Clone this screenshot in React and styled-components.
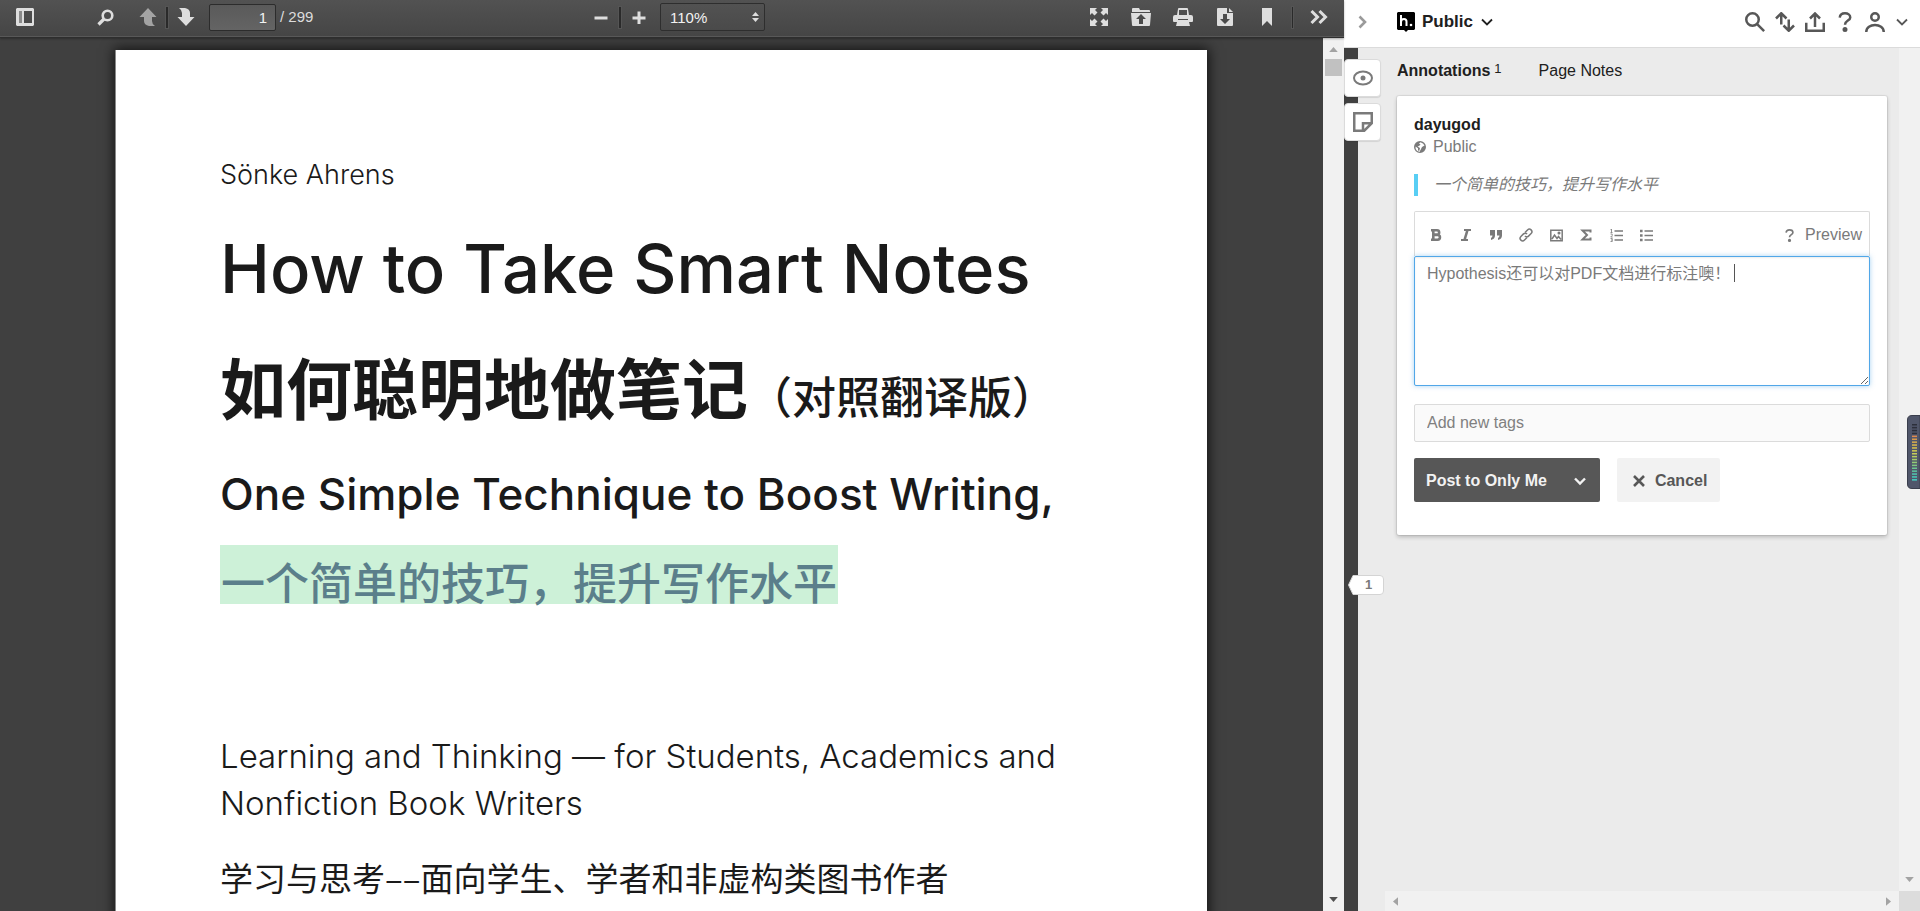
import React, { useState } from "react";
import styled, { createGlobalStyle } from "styled-components";

const GlobalStyle = createGlobalStyle`
  * {
    box-sizing: border-box;
  }
  body {
    margin: 0;
    overflow: hidden;
    font-family: "Liberation Sans", "Noto Sans CJK SC", sans-serif;
  }
  button, input, select, textarea {
    font-family: inherit;
    margin: 0;
  }
`;

const Layout = styled.div`
  display: flex;
  height: 100vh;
`;

//pdf viewer
const Viewer = styled.main`
  flex: 1;
  min-width: 0;
  display: flex;
  flex-direction: column;
  background-color: #404040;
`;

const Toolbar = styled.header`
  display: grid;
  grid-template-columns: 1fr auto 1fr;
  align-items: center;
  height: 38px;
  flex-shrink: 0;
  padding: 0 7px 3px 7px;
  color: #dcdcdc;
  background: linear-gradient(#525252, #454545);
  border-bottom: 1px solid #2e2e2e;
  box-shadow: inset 0 -1px 0 #585858, 0 1px 2px rgba(0, 0, 0, 0.3);
  z-index: 1;
`;

const ToolGroup = styled.div`
  display: flex;
  align-items: center;
  justify-content: ${(props) => props.$align || "flex-start"};
  gap: ${(props) => props.$gap || 0}px;
`;

const ZoomGroup = styled(ToolGroup)`
  margin-left: 4px;
`;

const ToolButton = styled.button`
  display: flex;
  align-items: center;
  justify-content: center;
  width: 36px;
  height: 30px;
  padding: 0;
  border: 0;
  background: none;
  color: #dedede;
  opacity: ${(props) => (props.disabled ? 0.6 : 1)};
`;

const Spacer = styled.div`
  width: ${(props) => props.$width}px;
`;

const Divider = styled.div`
  width: 2px;
  height: 21px;
  background: #2a2a2a;
  box-shadow: 0 0 0 1px #555;
`;

const EndDivider = styled(Divider)`
  width: 1px;
  margin: 0 2px 0 1px;
`;

const PageNumber = styled.input`
  width: 67px;
  height: 27px;
  margin: 0 4px 0 5px;
  padding: 0 8px 0 4px;
  border: 1px solid #2c2c2c;
  border-radius: 2px;
  background: linear-gradient(#5a5a5a, #646464);
  color: #f2f2f2;
  font-size: 15px;
  text-align: right;
  outline: none;
`;

const PageCount = styled.label`
  font-size: 15px;
  line-height: 20px;
`;

const ZoomBox = styled.div`
  position: relative;
  margin-left: 3px;
`;

const ZoomSelect = styled.select`
  appearance: none;
  display: block;
  width: 105px;
  height: 28px;
  padding: 0 24px 0 9px;
  border: 1px solid #2e2e2e;
  border-radius: 2px;
  background: linear-gradient(#525252, #4a4a4a);
  color: #f2f2f2;
  font-size: 15px;
`;

const ZoomArrows = styled.svg`
  position: absolute;
  right: 6px;
  top: 9px;
  pointer-events: none;
`;

const ViewerBody = styled.div`
  flex: 1;
  min-height: 0;
  display: flex;
`;

const PageArea = styled.div`
  flex: 1;
  min-width: 0;
  overflow: hidden;
  padding-top: 12px;
`;

const Page = styled.article`
  max-width: 1091px;
  min-height: 1400px;
  margin: 0 auto;
  padding: 105px 104px;
  background: #fff;
  color: #1a1a1a;
  box-shadow: -1px 0 0 #8a8a8a, 0 0 12px 2px rgba(0, 0, 0, 0.7);
  font-family: Inter, "Noto Sans CJK SC", sans-serif;
`;

const Author = styled.p`
  margin: 0 0 34px;
  font-size: 27px;
  line-height: 40px;
  font-weight: 300;
`;

const Title = styled.h1`
  margin: 0 0 41px;
  font-size: 67px;
  line-height: 80px;
  font-weight: 500;
`;

const TitleZh = styled.h2`
  margin: 0 0 34px;
  font-size: 66px;
  line-height: 80px;
  font-weight: 700;
`;

const Edition = styled.span`
  font-size: 44px;
  line-height: 44px;
  font-weight: 500;
`;

const Subtitle = styled.h2`
  margin: 0 0 21px;
  font-size: 44px;
  line-height: 60px;
  font-weight: 500;
  white-space: nowrap;
`;

const Highlight = styled.mark`
  display: block;
  width: fit-content;
  margin: 0 0 129px;
  padding: 19px 1px 0;
  background: #cdf1d8;
  color: #5b7f8b;
  font-size: 44px;
  line-height: 40px;
  font-weight: 500;
`;

const Blurb = styled.p`
  margin: 0 0 27px;
  font-size: 33px;
  line-height: 47px;
  font-weight: 300;
`;

const BlurbZh = styled(Blurb)`
  font-family: "Noto Sans CJK SC", sans-serif;
  font-weight: 400;
`;

//scroll bars
const Scrollbar = styled.div`
  display: flex;
  flex-direction: ${(props) => (props.$horizontal ? "row" : "column")};
  align-items: center;
  justify-content: space-between;
  padding: ${(props) => (props.$horizontal ? "0 8px" : "9px 0")};
  width: ${(props) => (props.$horizontal ? "auto" : "21px")};
  background: #f1f1f1;
`;

const ScrollStart = styled.div`
  display: flex;
  flex-direction: column;
  align-items: center;
  gap: 7px;
`;

const Thumb = styled.div`
  width: 17px;
  height: 17px;
  background: #c1c1c1;
`;

//hypothesis sidebar
const Sidebar = styled.aside`
  width: 30%;
  display: flex;
  flex-direction: column;
  background: #ebebeb;
`;

const TopBar = styled.header`
  display: flex;
  align-items: center;
  height: 48px;
  flex-shrink: 0;
  padding: 0 6px 3px 8px;
  border-bottom: 1px solid #dbdbdb;
  background: #fff;
  color: #575757;
`;

const IconButton = styled.button`
  display: flex;
  align-items: center;
  justify-content: center;
  width: ${(props) => props.$width || 30}px;
  height: 30px;
  padding: 0;
  border: 0;
  background: none;
  color: inherit;
`;

const GroupButton = styled.button`
  display: flex;
  align-items: center;
  gap: 7px;
  margin: 0 auto 0 25px;
  padding: 0;
  border: 0;
  background: none;
  color: #202020;
  font-size: 17px;
  font-weight: bold;
`;

const SidebarBody = styled.div`
  flex: 1;
  min-height: 0;
  display: grid;
  grid-template-columns: 14px 27px 1fr 21px;
  grid-template-rows: 1fr 20px;
`;

const Strip = styled.div`
  position: relative;
  grid-row: 1 / 3;
  background: #404040;
`;

const Gutter = styled.div`
  grid-row: 1 / 3;
`;

const SideControls = styled.div`
  position: absolute;
  top: 11px;
  left: 0;
  display: flex;
  flex-direction: column;
  gap: 6px;
`;

const SideButton = styled.button`
  display: flex;
  align-items: center;
  justify-content: center;
  width: 37px;
  height: 38px;
  padding: 0;
  border: 1px solid #dbdbdb;
  border-radius: 4px;
  background: #fff;
  color: #7a7a7a;
  box-shadow: 0 1px 1px rgba(0, 0, 0, 0.1);
`;

const Bucket = styled.button`
  position: absolute;
  top: 527px;
  left: 4px;
  width: 36px;
  height: 20px;
  padding: 0 0 0 5px;
  border: 0;
  background: none;
  color: #7a7a7a;
  font-size: 13px;
  font-weight: bold;
  line-height: 20px;
`;

const BucketShape = styled.svg`
  position: absolute;
  top: 0;
  left: 0;
  z-index: -1;
`;

const BucketLayer = styled.div`
  position: relative;
  z-index: 1;
`;

const Annotations = styled.div`
  padding: 0 12px;
`;

const Tabs = styled.nav`
  display: flex;
  gap: 37px;
  padding: 12px 0 14px;
`;

const Tab = styled.button`
  display: flex;
  gap: 4px;
  padding: 0;
  border: 0;
  background: none;
  color: #202020;
  font-size: 16px;
  line-height: 22px;
  font-weight: ${(props) => (props.$selected ? "bold" : "normal")};
`;

const TabCount = styled.span`
  font-size: 13px;
  line-height: 18px;
  font-weight: normal;
`;

const Card = styled.section`
  padding: 18px 17px 33px;
  border-radius: 2px;
  background: #fff;
  box-shadow: 0 0 0 1px rgba(0, 0, 0, 0.06), 0 2px 4px rgba(0, 0, 0, 0.22);
  color: #7a7a7a;
  font-size: 16px;
  line-height: 22px;
`;

const UserName = styled.h3`
  margin: 0;
  color: #202020;
  font-size: 16px;
  line-height: 22px;
`;

const ShareInfo = styled.div`
  display: flex;
  align-items: center;
  gap: 7px;
`;

const Quote = styled.blockquote`
  margin: 16px 0 15px;
  padding-left: 16px;
  border-left: 4px solid #58cef4;
  font-style: italic;
`;

const EditorToolbar = styled.div`
  display: flex;
  align-items: center;
  height: 45px;
  padding: 2px 7px 0 6px;
  border: 1px solid #dbdbdb;
  border-bottom: 0;
  border-radius: 2px 2px 0 0;
`;

const PreviewButton = styled.button`
  padding: 0;
  border: 0;
  background: none;
  color: inherit;
  font-size: 16px;
`;

const HelpLink = styled.a`
  display: flex;
  margin: 0 9px 0 auto;
  color: inherit;
`;

const EditorBox = styled.div`
  position: relative;
  display: flex;
`;

const Editor = styled.textarea`
  display: block;
  width: 100%;
  height: 130px;
  padding: 6px 12px;
  border: 1px solid #51a7e8;
  border-radius: 2px;
  outline: none;
  box-shadow: 0 1px 2px rgba(0, 0, 0, 0.08) inset, 0 0 5px rgba(81, 167, 232, 0.5);
  color: #7a7a7a;
  caret-color: transparent;
  font-size: 16px;
  line-height: 22px;
  resize: vertical;
`;

const Caret = styled.span`
  position: absolute;
  top: 8px;
  left: 320px;
  width: 1px;
  height: 18px;
  background: #555;
`;

const TagInput = styled.input`
  display: block;
  width: 100%;
  height: 38px;
  margin: 18px 0 16px;
  padding: 0 12px;
  border: 1px solid #dbdbdb;
  border-radius: 2px;
  background: #fafafa;
  font-size: 16px;
  &::placeholder {
    color: #808080;
  }
`;

const Actions = styled.div`
  display: flex;
  gap: 17px;
`;

const PostGroup = styled.div`
  display: flex;
  border-radius: 2px;
  background: #575757;
  color: #f2f2f2;
`;

const PostButton = styled.button`
  height: 44px;
  padding: 1px 12px 0;
  border: 0;
  background: none;
  color: inherit;
  font-size: 16px;
  font-weight: bold;
`;

const PostMenuButton = styled(PostButton)`
  display: flex;
  align-items: center;
  padding: 1px 13px 0 14px;
`;

const CancelButton = styled(PostButton)`
  display: flex;
  align-items: center;
  gap: 9px;
  padding: 1px 13px 0 15px;
  border-radius: 2px;
  background: #f2f2f2;
  color: #575757;
`;

const Corner = styled.div`
  background: #dcdcdc;
`;

const LevelMeter = styled.svg`
  position: fixed;
  right: 0;
  top: 415px;
`;

//icons
const Icon = ({ size = 20, box = 16, width = 2, children }) => (
  <svg
    width={size}
    height={size}
    viewBox={`0 0 ${box} ${box}`}
    fill="none"
    stroke="currentColor"
    strokeWidth={width}
    aria-hidden="true"
  >
    {children}
  </svg>
);

const Solid = ({ w = 20, h = 20, children }) => (
  <svg width={w} height={h} viewBox={`0 0 ${w} ${h}`} fill="currentColor" aria-hidden="true">
    {children}
  </svg>
);

const Chevron = ({ size = 14, width = 2 }) => (
  <Icon size={size} box={14} width={width}>
    <path d="M2 4.5l5 5 5-5" />
  </Icon>
);

const arrowPaths = {
  up: "M6 0L0 7h12z",
  down: "M0 0h12L6 7z",
  left: "M7 0v12L0 6z",
  right: "M0 0l7 6-7 6z",
};

const ScrollArrow = ({ dir, color = "#a3a3a3" }) => {
  const flat = dir === "up" || dir === "down";
  return (
    <svg
      width={flat ? 9 : 5}
      height={flat ? 5 : 9}
      viewBox={flat ? "0 0 12 7" : "0 0 7 12"}
      fill={color}
      aria-hidden="true"
    >
      <path d={arrowPaths[dir]} />
    </svg>
  );
};

const formatTools = [
  {
    name: "Bold",
    icon: (
      <Icon box={12} size={12} width={2.6}>
        <path d="M1 1.300h6a2.100 2.100 0 0 1 0 4.300H3M3 6h4.600a2.300 2.300 0 0 1 0 4.700H1M3.300 1v10" />
      </Icon>
    ),
  },
  {
    name: "Italic",
    icon: (
      <Icon box={12} size={12}>
        <path d="M4 1h7M1 11h7" />
        <path d="M7.500 1l-3 10" strokeWidth="2.600" />
      </Icon>
    ),
  },
  {
    name: "Quote",
    icon: (
      <Solid w={12} h={12}>
        <path d="M0 1h5v5.500Q5 10 1 11V9q1.500-.8 1.500-2.500H0zM7 1h5v5.500Q12 10 8 11V9q1.500-.8 1.500-2.500H7z" />
      </Solid>
    ),
  },
  {
    name: "Link",
    icon: (
      <Icon size={14} box={14} width={1.500}>
        <path d="M6 4.500l2.500-2.600a2.500 2.500 0 0 1 3.600 3.600L9.500 8.100a2.500 2.500 0 0 1-3.600 0" />
        <path d="M8 9.500l-2.500 2.600a2.500 2.500 0 0 1-3.600-3.600l2.600-2.600a2.500 2.500 0 0 1 3.600 0" />
      </Icon>
    ),
  },
  {
    name: "Image",
    icon: (
      <Icon size={13} box={13} width={1.500}>
        <path d="M.8 1.200h11.400v10.600H.8zM2 10l2.500-4L7 9.500 8.500 7.500l2.500 3" />
        <circle cx="9" cy="4" r=".8" />
      </Icon>
    ),
  },
  {
    name: "Math",
    icon: (
      <Icon size={12} box={12}>
        <path d="M10.500 3.500V1.500H2.500L7 6l-4.500 4.500h8v-2" />
      </Icon>
    ),
  },
  {
    name: "Numbered list",
    icon: (
      <Icon size={13} box={13} width={1.600}>
        <path d="M4.500 2H13M4.500 6.500H13M4.500 11H13" />
        <path d="M1.500 0v3.500M.5.600h1M.5 3.500h2M.5 5h1.700v1.500L.7 8h2M.5 9.500h1.800v3H.5M1 11h1" strokeWidth=".8" />
      </Icon>
    ),
  },
  {
    name: "Bulleted list",
    icon: (
      <Icon size={13} box={13} width={1.600}>
        <path d="M4.500 2H13M4.500 6.500H13M4.500 11H13" />
        <path d="M0 2h2.600M0 6.500h2.600M0 11h2.600" strokeWidth="2.600" />
      </Icon>
    ),
  },
];

const sidebarTools = [
  {
    name: "Search",
    icon: (
      <Icon>
        <circle cx="6" cy="6" r="5" />
        <path d="M9.700 9.700l5.600 5.600" />
      </Icon>
    ),
  },
  {
    name: "Sort",
    icon: (
      <Icon>
        <path d="M5 10V1.500M.8 5.200L5 1l4.200 4.200M11 6v8.500M6.800 10.800L11 15l4.200-4.200" />
      </Icon>
    ),
  },
  {
    name: "Share",
    icon: (
      <Icon>
        <path d="M8 12V1.500M4 5.200L8 1.200l4 4M1 8.500V15h14V8.500" />
      </Icon>
    ),
  },
  {
    name: "Help",
    icon: (
      <Icon>
        <path d="M3.800 4.500C4 2.200 5.600 1 8 1s4.200 1.300 4.200 3.300C12.200 7 8 6.800 8 10.200" />
        <circle cx="8" cy="14" r="1" />
      </Icon>
    ),
  },
  {
    name: "Account",
    icon: (
      <Icon>
        <circle cx="8" cy="4" r="3" />
        <path d="M1 16c0-7.500 14-7.500 14 0" />
      </Icon>
    ),
  },
];

const meterColors = [
  "#2c2f3b", "#2c2f3b", "#2c2f3b", "#2c2f3b", "#e08a4e", "#d99a4c", "#d9ad4c",
  "#dcb94a", "#d9c44c", "#d2cc50", "#c8d058", "#b8d060", "#a4cf6a", "#92cc74",
  "#80c880", "#6cc690", "#5cc6a0", "#50c8b0", "#48ccba", "#44d0c4",
];

const PdfToolbar = () => (
  <Toolbar>
    <ToolGroup>
      <ToolButton aria-label="Toggle sidebar">
        <Solid w={18} h={18}>
          <path fillRule="evenodd" d="M1 0h16l1 1v16l-1 1H1l-1-1V1zM8 3v12h8V3z" />
          <path d="M3 3h3v12H3z" fill="#8a8a8a" />
        </Solid>
      </ToolButton>
      <Spacer $width={44} />
      <ToolButton aria-label="Find">
        <Icon size={17} box={17} width={2.600}>
          <circle cx="10.500" cy="6.500" r="4.800" />
          <path d="M7 10l-5.500 5.500" strokeWidth="3.200" />
        </Icon>
      </ToolButton>
      <Spacer $width={7} />
      <ToolButton aria-label="Previous page" disabled>
        <Solid w={18} h={18}>
          <path d="M9 0l8.500 9H13v4q0 3 3 5h-6q-5-1-5-5V9H.5z" />
        </Solid>
      </ToolButton>
      <Divider />
      <ToolButton aria-label="Next page">
        <Solid w={18} h={18}>
          <path d="M9 18L.5 9H5V5q0-3-3-5h6q5 1 5 5v4h4.500z" />
        </Solid>
      </ToolButton>
      <PageNumber id="pageNumber" defaultValue="1" />
      <PageCount htmlFor="pageNumber">/ 299</PageCount>
    </ToolGroup>
    <ZoomGroup>
      <ToolButton aria-label="Zoom out">
        <Icon size={14} box={14} width={3}>
          <path d="M.5 8h13" />
        </Icon>
      </ToolButton>
      <Divider />
      <ToolButton aria-label="Zoom in">
        <Icon size={14} box={14} width={3}>
          <path d="M.5 8h13M7 1.500v13" />
        </Icon>
      </ToolButton>
      <ZoomBox>
        <ZoomSelect aria-label="Zoom" defaultValue="110">
          <option value="110">110%</option>
        </ZoomSelect>
        <ZoomArrows width="7" height="10" viewBox="0 0 7 10" fill="#dedede">
          <path d="M3.500 0L7 4H0zM3.500 10L0 6h7z" />
        </ZoomArrows>
      </ZoomBox>
    </ZoomGroup>
    <ToolGroup $align="flex-end" $gap={6}>
      <ToolButton aria-label="Presentation mode">
        <Solid w={18} h={18}>
          <path d="M0 0h7L5 2l2.500 2.500-3 3L2 5 0 7zM18 0v7l-2-2-2.500 2.500-3-3L13 2l-2-2zM0 18v-7l2 2 2.500-2.500 3 3L5 16l2 2zM18 18h-7l2-2-2.500-2.500 3-3L16 13l2-2z" />
        </Solid>
      </ToolButton>
      <ToolButton aria-label="Open file">
        <Solid w={20} h={18}>
          <path d="M1 4V1q0-1 1-1h6l1 2h9q1 0 1 1v1z" />
          <path fillRule="evenodd" d="M0 5h20l-1 12q0 1-1 1H2q-1 0-1-1zM10 6l-5 5h3v5h4v-5h3z" />
        </Solid>
      </ToolButton>
      <ToolButton aria-label="Print">
        <Solid w={20} h={18}>
          <path fillRule="evenodd" d="M4 7l1-6q0-1 1-1h8q1 0 1 1l1 6h2q2 0 2 2v4q0 1-1 1h-3l1 4H3l1-4H1q-1 0-1-1V9q0-2 2-2zM6 2v5h8V2zM5 11v1h10v-1z" />
        </Solid>
      </ToolButton>
      <ToolButton aria-label="Download">
        <Solid w={16} h={18}>
          <path fillRule="evenodd" d="M1 0h9v5h6v12q0 1-1 1H1q-1 0-1-1V1q0-1 1-1zM6 6v5H3l5 5 5-5h-3V6z" />
          <path d="M12 0l4 4h-4z" />
        </Solid>
      </ToolButton>
      <ToolButton aria-label="Bookmark">
        <Solid w={10} h={18}>
          <path d="M0 0h10v18l-5-5-5 5z" />
        </Solid>
      </ToolButton>
      <EndDivider />
      <ToolButton aria-label="Tools">
        <Icon size={18} box={18} width={3}>
          <path d="M1.500 3l6 6-6 6M9.500 3l6 6-6 6" />
        </Icon>
      </ToolButton>
    </ToolGroup>
  </Toolbar>
);

const PdfPage = () => (
  <Page>
    <Author>Sönke Ahrens</Author>
    <Title>How to Take Smart Notes</Title>
    <TitleZh>
      如何聪明地做笔记<Edition>（对照翻译版）</Edition>
    </TitleZh>
    <Subtitle>One Simple Technique to Boost Writing,</Subtitle>
    <Highlight>一个简单的技巧，提升写作水平</Highlight>
    <Blurb>
      Learning and Thinking — for Students, Academics and Nonfiction Book Writers
    </Blurb>
    <BlurbZh>学习与思考––面向学生、学者和非虚构类图书作者</BlurbZh>
  </Page>
);

const AnnotationCard = () => {
  const [text, setText] = useState("Hypothesis还可以对PDF文档进行标注噢！");

  return (
    <Card>
      <UserName>dayugod</UserName>
      <ShareInfo>
        <Solid w={12} h={12}>
          <path
            fillRule="evenodd"
            d="M6 0a6 6 0 1 1 0 12A6 6 0 0 1 6 0zM6.500 1.200L5 2.500l1.500 1L5 5l-1.500.500L6 7l-.5 2L5 10.500 4 9V7.200L1.500 5.500Q1.200 8 3 9.700 4.500 11 6 10.800q-.5-.8.500-1.800L7.500 7 8 6l2.500-1.500L9 2.500z"
          />
        </Solid>
        Public
      </ShareInfo>
      <Quote>一个简单的技巧，提升写作水平</Quote>
      <EditorToolbar>
        {formatTools.map((tool) => (
          <IconButton key={tool.name} aria-label={tool.name}>
            {tool.icon}
          </IconButton>
        ))}
        <HelpLink href="#help" aria-label="Formatting help">
          <Icon size={13}>
            <path d="M3.800 4.500C4 2.200 5.600 1 8 1s4.200 1.300 4.200 3.300C12.200 7 8 6.800 8 10.200" />
            <circle cx="8" cy="14" r="1" />
          </Icon>
        </HelpLink>
        <PreviewButton>Preview</PreviewButton>
      </EditorToolbar>
      <EditorBox>
        <Editor
          aria-label="Annotation text"
          value={text}
          onChange={(event) => setText(event.target.value)}
        />
        <Caret />
      </EditorBox>
      <TagInput aria-label="Tags" placeholder="Add new tags" />
      <Actions>
        <PostGroup>
          <PostButton>Post to Only Me</PostButton>
          <PostMenuButton aria-label="Visibility">
            <Chevron width={2.400} />
          </PostMenuButton>
        </PostGroup>
        <CancelButton>
          <Icon size={14} box={14} width={2.600}>
            <path d="M2 2l10 10M12 2L2 12" />
          </Icon>
          Cancel
        </CancelButton>
      </Actions>
    </Card>
  );
};

const App = () => (
  <Layout>
    <GlobalStyle />
    <Viewer>
      <PdfToolbar />
      <ViewerBody>
        <PageArea>
          <PdfPage />
        </PageArea>
        <Scrollbar>
          <ScrollStart>
            <ScrollArrow dir="up" />
            <Thumb />
          </ScrollStart>
          <ScrollArrow dir="down" color="#505050" />
        </Scrollbar>
      </ViewerBody>
    </Viewer>
    <Sidebar>
      <TopBar>
        <IconButton $width={20} aria-label="Close sidebar">
          <Icon size={14} box={14} width={2.600}>
            <path d="M4.500 1.500L10 7l-5.500 5.500" stroke="#9a9a9a" />
          </Icon>
        </IconButton>
        <GroupButton>
          <svg width="18" height="20" viewBox="0 0 18 20" aria-hidden="true">
            <path d="M1 0h16l1 1v16l-1 1h-6l-2 2-2-2H1l-1-1V1z" fill="#000" />
            <path d="M4 3v11M4 10q0-3 3-3 2.500 0 2.500 2.500V14" fill="none" stroke="#fff" strokeWidth="2" />
            <circle cx="14" cy="13" r="1.300" fill="#fff" />
          </svg>
          Public
          <Chevron width={1.800} />
        </GroupButton>
        {sidebarTools.map((tool) => (
          <IconButton key={tool.name} aria-label={tool.name}>
            {tool.icon}
          </IconButton>
        ))}
        <IconButton $width={24} aria-label="Account menu">
          <Chevron width={1.800} />
        </IconButton>
      </TopBar>
      <SidebarBody>
        <Strip>
          <SideControls>
            <SideButton aria-label="Show highlights">
              <Icon>
                <ellipse cx="8" cy="8" rx="7.200" ry="5.200" strokeWidth="1.600" />
                <circle cx="8" cy="8" r="2" fill="currentColor" stroke="none" />
              </Icon>
            </SideButton>
            <SideButton aria-label="New page note">
              <Icon>
                <path d="M1 1h14v8l-6 6H1zM8 15V9h7" />
              </Icon>
            </SideButton>
          </SideControls>
          <BucketLayer>
            <Bucket>
              <BucketShape width="36" height="20" viewBox="0 0 36 20">
                <path d="M5 .5h27q3.500 0 3.500 3.500v12q0 3.500-3.500 3.500H5L.5 10z" fill="#fff" stroke="#d4d4d4" />
              </BucketShape>
              1
            </Bucket>
          </BucketLayer>
        </Strip>
        <Gutter />
        <Annotations>
          <Tabs>
            <Tab $selected>
              Annotations <TabCount>1</TabCount>
            </Tab>
            <Tab>Page Notes</Tab>
          </Tabs>
          <AnnotationCard />
        </Annotations>
        <Scrollbar>
          <span />
          <ScrollArrow dir="down" />
        </Scrollbar>
        <Scrollbar $horizontal>
          <ScrollArrow dir="left" />
          <ScrollArrow dir="right" />
        </Scrollbar>
        <Corner />
      </SidebarBody>
    </Sidebar>
    <LevelMeter width="13" height="74" viewBox="0 0 13 74" aria-hidden="true">
      <path d="M13 .5H5Q.5.500.5 5v64q0 4.500 4.500 4.500h8z" fill="#50566a" stroke="#3a3e4c" />
      {meterColors.map((color, i) => (
        <rect key={i} x="5" y={9 + i * 2.900} width="5" height="1.500" fill={color} />
      ))}
    </LevelMeter>
  </Layout>
);

export default App;
